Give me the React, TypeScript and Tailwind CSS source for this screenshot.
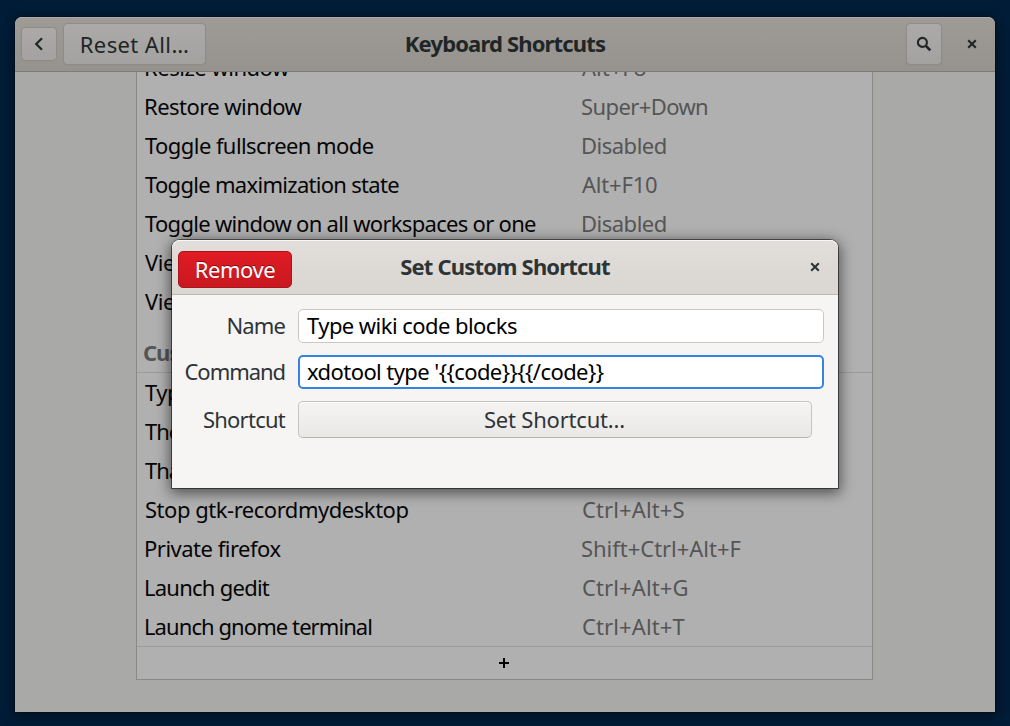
type Shortcut = {
  name: string;
  nameClass: string;
  keys?: string;
  keysClass?: string;
};

const windowShortcuts: Shortcut[] = [
  { name: "Resize window", nameClass: "-ml-px tracking-[-0.48px]", keys: "Alt+F8", keysClass: "" },
  { name: "Restore window", nameClass: "-ml-px tracking-[-0.54px]", keys: "Super+Down", keysClass: "-ml-px tracking-[-0.6px]" },
  { name: "Toggle fullscreen mode", nameClass: "tracking-[-0.57px]", keys: "Disabled", keysClass: "-ml-px tracking-[-0.5px]" },
  { name: "Toggle maximization state", nameClass: "tracking-[-0.7px]", keys: "Alt+F10", keysClass: "tracking-[-0.2px]" },
  { name: "Toggle window on all workspaces or one", nameClass: "tracking-[-0.7px]", keys: "Disabled", keysClass: "-ml-px tracking-[-0.5px]" },
  { name: "View left", nameClass: "tracking-[-0.5px]" },
  { name: "View right", nameClass: "tracking-[-0.5px]" },
];

const customShortcuts: Shortcut[] = [
  { name: "Typ", nameClass: "tracking-[-0.5px]" },
  { name: "The", nameClass: "tracking-[-1.1px]" },
  { name: "Tha", nameClass: "tracking-[-1.1px]" },
  { name: "Stop gtk-recordmydesktop", nameClass: "tracking-[-0.47px]", keys: "Ctrl+Alt+S", keysClass: "tracking-[0.12px]" },
  { name: "Private firefox", nameClass: "-ml-px tracking-[-0.5px]", keys: "Shift+Ctrl+Alt+F", keysClass: "-ml-px tracking-[-0.03px]" },
  { name: "Launch gedit", nameClass: "-ml-px tracking-[-0.75px]", keys: "Ctrl+Alt+G", keysClass: "tracking-[0.12px]" },
  { name: "Launch gnome terminal", nameClass: "-ml-px tracking-[-0.92px]", keys: "Ctrl+Alt+T", keysClass: "tracking-[0.12px]" },
];

function ShortcutRow({ name, nameClass, keys, keysClass = "" }: Shortcut) {
  return (
    <div className="flex h-[39px] shrink-0 pl-2 leading-[39px] whitespace-nowrap">
      <div className="w-[437px] shrink-0">
        <span className={`inline-block ${nameClass}`}>{name}</span>
      </div>
      {keys && (
        <div className="text-[#555555]">
          <span className={`inline-block ${keysClass}`}>{keys}</span>
        </div>
      )}
    </div>
  );
}

function CloseIcon() {
  return (
    <svg width="10" height="10" viewBox="0 0 10 10" fill="none" stroke="currentColor" strokeWidth="2.1">
      <path d="M1.2 1.2l7.6 7.6M8.8 1.2L1.2 8.8" />
    </svg>
  );
}

function MainHeader() {
  return (
    <header className="grid h-[55px] shrink-0 grid-cols-[1fr_auto_1fr] items-center rounded-t-[7px] border-b border-[#807b75] bg-linear-to-b from-[#9e9a96] to-[#96928e] text-[#202526] shadow-[inset_0_1px_#aeaba8]">
      <div className="flex items-center gap-2 pl-[7px]">
        <button className="flex h-[32px] w-[34px] items-center justify-center rounded-[4px] bg-linear-to-b from-[#abaaa9] to-[#a4a2a0] shadow-[0_0_0_1px_#8f8b86,0_1px_2px_#8f8b86]">
          <svg width="16" height="16" viewBox="0 0 16 16" fill="none" stroke="currentColor" strokeWidth="2.2">
            <path d="M11 2.2L5.2 8l5.8 5.8" />
          </svg>
        </button>
        <button className="h-10 w-[141px] rounded-[4px] bg-linear-to-b from-[#abaaa9] to-[#a4a2a0] text-center leading-[39px] tracking-[0.4px] whitespace-nowrap shadow-[0_0_0_1px_#8f8b86,0_1px_2px_#8f8b86]">
          Reset All…
        </button>
      </div>
      <h1 className="pb-0.5 font-bold tracking-[-0.84px]">Keyboard Shortcuts</h1>
      <div className="flex items-center justify-end gap-[26px] pr-[18px]">
        <button className="flex h-10 w-[34px] items-center justify-center rounded-[4px] bg-linear-to-b from-[#abaaa9] to-[#a4a2a0] shadow-[0_0_0_1px_#8f8b86,0_1px_2px_#8f8b86]">
          <svg width="16" height="16" viewBox="0 0 16 16" fill="none" stroke="currentColor">
            <circle cx="6.4" cy="6.4" r="4.5" strokeWidth="2.1" />
            <path d="M9.6 9.6l4.7 4.7" strokeWidth="2.6" />
          </svg>
        </button>
        <button>
          <CloseIcon />
        </button>
      </div>
    </header>
  );
}

function ShortcutDialog() {
  return (
    <section className="absolute top-[240px] left-[172px] flex h-[248px] w-[666px] flex-col rounded-t-[8px] bg-[#f6f5f4] text-[#2e3436] shadow-[0_0_0_1px_rgba(0,0,0,0.5),0_3px_14px_2px_rgba(0,0,0,0.55)]">
      <header className="grid h-[55px] shrink-0 grid-cols-[1fr_auto_1fr] items-center rounded-t-[8px] border-b border-[#bfb8b1] bg-linear-to-b from-[#e1dedb] to-[#dad6d2] shadow-[inset_0_1px_#f8f7f7]">
        <div className="pt-[5px] pl-[6px]">
          <button className="h-[37px] w-[114px] rounded-[5px] border border-[#a8151b] bg-linear-to-b from-[#e01b24] to-[#c91820] text-center leading-[35px] tracking-[-0.45px] text-white [text-shadow:0_-1px_rgba(0,0,0,0.45)]">
            Remove
          </button>
        </div>
        <h2 className="pb-0.5 font-bold tracking-[-0.83px]">Set Custom Shortcut</h2>
        <button className="justify-self-end pr-[18px]">
          <CloseIcon />
        </button>
      </header>
      <form className="flex flex-col gap-3 pt-[14px] pr-[14px] whitespace-nowrap">
        <div className="flex h-[34px] gap-3 leading-[33px]">
          <label className="w-[114px] pr-px text-right tracking-[-0.9px]">Name</label>
          <div className="flex-1 rounded-[5px] border border-[#cdc7c2] bg-white pl-2 leading-[31px] tracking-[-0.56px] text-black">
            Type wiki code blocks
          </div>
        </div>
        <div className="flex h-[34px] gap-3 leading-[33px]">
          <label className="w-[114px] pr-px text-right tracking-[-1.05px]">Command</label>
          <div className="flex-1 rounded-[5px] border-2 border-[#3584e4] bg-white pl-[7px] leading-[29px] tracking-[-0.58px] text-black">
            {"xdotool type '{{code}}{{/code}}"}
          </div>
        </div>
        <div className="flex h-[37px] gap-3 pr-3 leading-[37px]">
          <label className="w-[114px] pr-px text-right tracking-[-0.75px]">Shortcut</label>
          <button
            type="button"
            className="flex-1 rounded-[5px] border border-[#c7c3bf] border-b-[#b9b3ad] bg-linear-to-b from-[#f5f4f3] to-[#eae8e7] pr-px text-center leading-[35px] tracking-[-0.2px] shadow-[inset_0_1px_#fcfcfb]"
          >
            Set Shortcut…
          </button>
        </div>
      </form>
    </section>
  );
}

export default function App() {
  return (
    <div className="relative h-[726px] w-[1010px] overflow-hidden bg-[#001c37] px-[15px] pt-[17px] font-['Noto_Sans',sans-serif] text-[22px]">
      <main className="flex h-[695px] w-[980px] flex-col rounded-t-[8px] bg-[#a9a9a7] shadow-[0_0_0_1px_rgba(0,0,0,0.25),0_3px_12px_2px_rgba(0,0,0,0.4)]">
        <MainHeader />
        <div className="flex flex-1 justify-center overflow-hidden pr-px">
          <div className="flex h-[608px] w-[737px] flex-col overflow-hidden border border-t-0 border-[#8c8883] bg-[#b0b0b0] text-[#050505]">
            <div className="-mt-6 flex flex-col">
              {windowShortcuts.map((s) => (
                <ShortcutRow key={s.name} {...s} />
              ))}
            </div>
            <div className="h-[52px] shrink-0 border-b border-[#9b9b9b] pt-[11px] pl-[6px] leading-[40px] font-bold tracking-[-1px] text-[#555555]">
              Custom
            </div>
            {customShortcuts.map((s) => (
              <ShortcutRow key={s.name} {...s} />
            ))}
            <button className="flex h-[33px] shrink-0 items-center justify-center border-t border-[#9b9b9b] pr-[1px]">
              <svg width="10" height="10" viewBox="0 0 10 10" fill="currentColor">
                <path d="M4 0h2v4h4v2H6v4H4V6H0V4h4z" />
              </svg>
            </button>
          </div>
        </div>
      </main>
      <ShortcutDialog />
    </div>
  );
}
